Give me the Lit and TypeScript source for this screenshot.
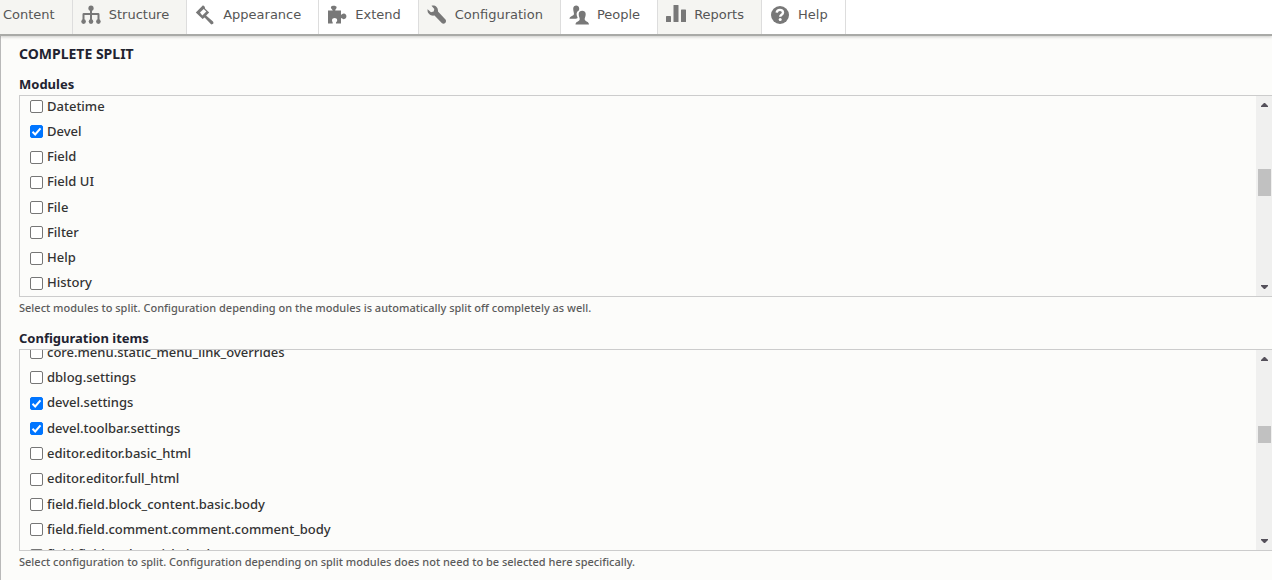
import { LitElement, html, css, svg } from "lit";

type Tab = { label: string; icon: unknown; trail?: boolean };
type Item = { label: string; on?: boolean };

const tabs: Tab[] = [
  { label: "Content", icon: null, trail: true },
  {
    label: "Structure",
    trail: true,
    icon: svg`<circle cx="10" cy="3.2" r="2.6"/><path d="M9 4h2v4h6.2a1.3 1.3 0 0 1 1.3 1.3V15h-2v-5H11v5H9v-5H3.500v5h-2V9.300A1.300 1.300 0 0 1 2.800 8H9z"/><circle cx="2.600" cy="16.600" r="2.300"/><circle cx="10" cy="16.600" r="2.300"/><circle cx="17.400" cy="16.600" r="2.300"/>`,
  },
  {
    label: "Appearance",
    icon: svg`<path d="M.8 7.600 8 .2l1.800 1.600.2 1.800 4.200 4-3.100 3 6.900 6q1.600 2.700-1.700 2.800l-6.700-6.800L7.600 14z"/><path class="hole" d="M5 7.600 8.700 4l2.600 2.600-4 4z"/>`,
  },
  {
    label: "Extend",
    icon: svg`<path d="M1 5.500h4.800C4.900 3.800 3.900 3.900 3.900 2.300 3.900.3 9.600.3 9.600 2.300c0 1.600-1.300 1.700-1.400 3.200H14v4.200c1.200 0 1.400-1.200 2.800-1.200 3.500 0 3.500 5.700 0 5.700-1.400 0-1.600-1.200-2.800-1.200V18.500H9c-.4-1.600 1.200-1.600 1.200-3.300C10.200 12.200 5 12.200 5 15.200c0 1.700 1 1.800.7 3.300H1z"/>`,
  },
  {
    label: "Configuration",
    trail: true,
    icon: svg`<path d="M.6 4.300 4 7.200l2.700-.6.600-2.700L4.500.8C8-.1 11.300 2 11 6.600l7.700 8.100c1.300 2.600-1.500 5-3.700 3.600L7.500 10.500C3.500 11.300-.1 8.500.6 4.300z"/>`,
  },
  {
    label: "People",
    icon: svg`<path d="M4.200 3.500c0-3.900 6-3.900 6 0 0 .7-.1 1.300-.3 2-1.900.8-2.700 2.700-2.100 5l.9 2.500-1.700.8H.5c0-2.800 3.900-2.600 4.400-4.600C5.200 7.800 4.200 6.300 4.200 3.500z"/><path d="M9.700 9c0-4.300 7-4.300 7 0 0 3-1.300 4.100-1 5.600.6 2.500 4.200 1.600 4.300 5H6.500c.1-3.400 3.700-2.500 4.200-5C11 13.100 9.700 12 9.700 9z"/>`,
  },
  {
    label: "Reports",
    trail: true,
    icon: svg`<rect x="0" y="11" width="5" height="6" rx=".6"/><rect x="7.500" y="0" width="5" height="17" rx=".6"/><rect x="15" y="4.500" width="5" height="12.500" rx=".6"/>`,
  },
  {
    label: "Help",
    icon: svg`<circle cx="10" cy="10" r="9"/><path class="mark" d="M6.700 7.700C7 3.900 13 4 13 7.400c0 2.300-2.800 2.400-2.800 4.400"/><circle class="hole" cx="10.200" cy="14.600" r="1.500"/>`,
  },
];

const modules: Item[] = [
  { label: "Datetime" },
  { label: "Devel", on: true },
  { label: "Field" },
  { label: "Field UI" },
  { label: "File" },
  { label: "Filter" },
  { label: "Help" },
  { label: "History" },
];

const configItems: Item[] = [
  { label: "core.menu.static_menu_link_overrides" },
  { label: "dblog.settings" },
  { label: "devel.settings", on: true },
  { label: "devel.toolbar.settings", on: true },
  { label: "editor.editor.basic_html" },
  { label: "editor.editor.full_html" },
  { label: "field.field.block_content.basic.body" },
  { label: "field.field.comment.comment.comment_body" },
  { label: "field.field.node.article.body" },
];

class CheckList extends LitElement {
  static properties = {
    heading: {},
    description: {},
    items: { attribute: false },
    variant: {},
  };
  declare heading: string;
  declare description: string;
  declare items: Item[];
  declare variant: string;

  static styles = css`
    :host { display: block; }
    fieldset { border: 0; margin: 0; padding: 0; min-width: 0; }
    legend { padding: 0 0 1px; font-weight: 700; line-height: 20px; color: #222330; }
    .box {
      box-sizing: border-box;
      height: 202px;
      display: flex;
      border: 1px solid #ccc;
      border-right: 0;
      overflow: hidden;
    }
    .list { flex: 1; min-width: 0; padding-left: 10px; overflow: hidden; }
    .rows { display: flex; flex-direction: column; height: 202px; margin-top: -3px; }
    .partial .rows { height: 228px; margin-top: -11px; }
    .row { flex: 1; display: flex; align-items: center; gap: 4px; }
    input {
      appearance: none;
      flex: none;
      box-sizing: border-box;
      width: 13px;
      height: 13px;
      margin: 2px 0 0;
      border: 1px solid #767676;
      border-radius: 2px;
      background: #fff;
    }
    input:checked {
      border-color: #0075ff;
      background: #0075ff url("data:image/svg+xml,%3Csvg xmlns='http://www.w3.org/2000/svg' viewBox='0 0 11 11'%3E%3Cpath d='M1.500 5.800 4.200 8.500 9.500 2.300' fill='none' stroke='white' stroke-width='2'/%3E%3C/svg%3E");
    }
    label { line-height: 20px; white-space: nowrap; }
    .bar {
      flex: none;
      width: 16px;
      background: #f0f0ef;
      display: flex;
      flex-direction: column;
      align-items: center;
      padding: 7px 0;
      box-sizing: border-box;
    }
    .bar svg { width: 7px; height: 4px; fill: #54505a; flex: none; }
    .before { flex: 61 0 0; }
    .thumb { width: 13px; height: 27px; background: #c1c1c1; }
    .after { flex: 88 0 0; }
    .partial .before { flex: 64 0 0; }
    .partial .thumb { height: 17px; }
    .partial .after { flex: 95 0 0; }
    .description { margin: 0; font-size: 11px; line-height: 22px; color: #5b5b5b; }
  `;

  render() {
    return html`<fieldset class=${this.variant}>
      <legend>${this.heading}</legend>
      <div class="box">
        <div class="list"><div class="rows">
          ${this.items.map(
            (item, i) => html`<div class="row">
              <input type="checkbox" id="c${i}" .checked=${!!item.on} /><label for="c${i}">${item.label}</label>
            </div>`,
          )}
        </div></div>
        <div class="bar" aria-hidden="true">
          <svg viewBox="0 0 7 4"><path d="M0 4V3l3-3h1l3 3v1z" /></svg>
          <div class="before"></div><div class="thumb"></div><div class="after"></div>
          <svg viewBox="0 0 7 4"><path d="M0 0v1l3 3h1l3-3V0z" /></svg>
        </div>
      </div>
      <p class="description">${this.description}</p>
    </fieldset>`;
  }
}
customElements.define("check-list", CheckList);

class AppRoot extends LitElement {
  static styles = css`
    :host {
      display: flex;
      flex-direction: column;
      min-height: 100vh;
      background: #fcfcfa;
      color: #333;
      font: 500 13px/20px "Noto Sans", sans-serif;
    }
    nav {
      display: flex;
      height: 34px;
      background: #fff;
      border-bottom: 2px solid #a9aaa7;
      box-shadow: 0 1px 3px #0003;
      font: 13px/16px "DejaVu Sans", sans-serif;
      z-index: 1;
      overflow: hidden;
      flex: none;
    }
    a {
      display: flex;
      align-items: flex-start;
      gap: 8px;
      padding: 5px 17px 0 8px;
      border-right: 1px solid #ddd;
      color: #565656;
      text-decoration: none;
    }
    a:first-child { padding-left: 3px; }
    a span { padding-top: 2px; }
    a.trail { background: #f5f5f2; }
    a svg { width: 20px; height: 20px; fill: #787878; }
    .hole { fill: #fff; }
    .mark { fill: none; stroke: #fff; stroke-width: 2.400; }
    main { flex: 1; padding: 8px 0 0 18px; border-left: 1px solid #b9b9b9; }
    h2 { margin: 0 0 10px; font-size: 14px; line-height: 20px; font-weight: 700; color: #222330; text-transform: uppercase; }
    check-list + check-list { margin-top: 9px; }
  `;

  render() {
    return html`<nav>
        ${tabs.map(
          (t) => html`<a href="#" class=${t.trail ? "trail" : ""}
            >${t.icon ? html`<svg viewBox="0 0 20 20" aria-hidden="true">${t.icon}</svg>` : ""}<span>${t.label}</span></a
          >`,
        )}
      </nav>
      <main>
        <h2>Complete split</h2>
        <check-list
          heading="Modules"
          .items=${modules}
          description="Select modules to split. Configuration depending on the modules is automatically split off completely as well."
        ></check-list>
        <check-list
          variant="partial"
          heading="Configuration items"
          .items=${configItems}
          description="Select configuration to split. Configuration depending on split modules does not need to be selected here specifically."
        ></check-list>
      </main>`;
  }
}
customElements.define("app-root", AppRoot);
